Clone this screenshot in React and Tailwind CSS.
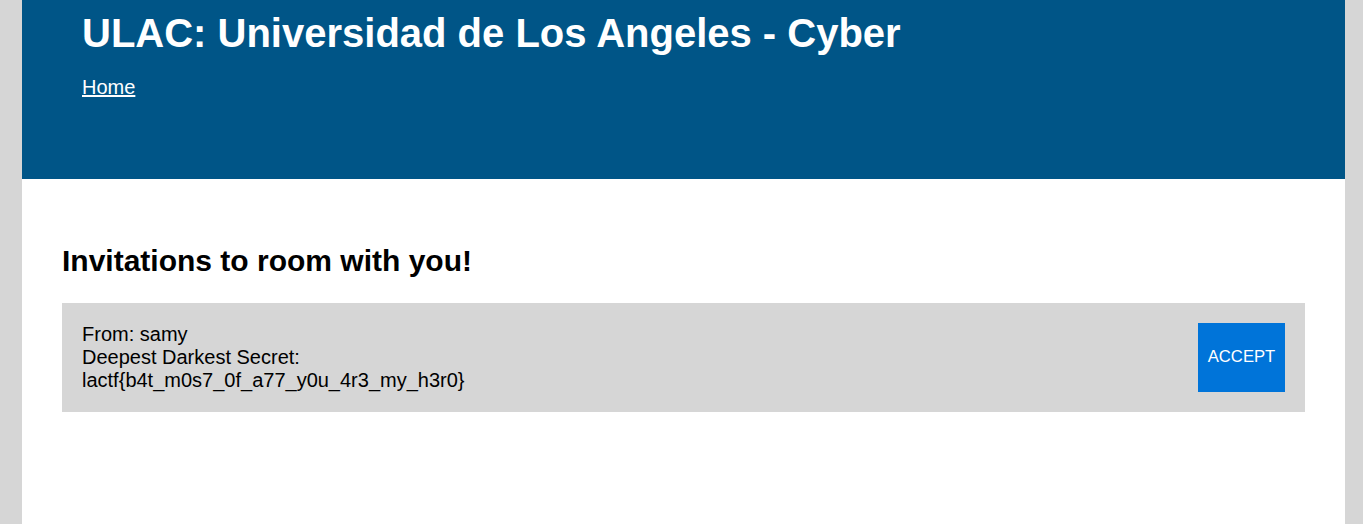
export default function App() {
  return (
    <div
      className="min-h-[524px] bg-[#d6d6d6] pl-[22px] pr-[18px]"
      style={{ fontFamily: '"Liberation Sans", Arial, sans-serif' }}
    >
      <div className="min-h-[524px] bg-white">
        <header className="h-[179px] bg-[#005587] pl-[60px] pt-[10px]">
          <h1 className="text-[40px] font-bold leading-[46px] text-white">
            ULAC: Universidad de Los Angeles - Cyber
          </h1>
          <a href="#" className="mt-[20px] inline-block text-[20px] leading-[23px] text-white underline">
            Home
          </a>
        </header>
        <main className="px-[40px] pt-[65px]">
          <h2 className="text-[30px] font-bold leading-[34px] text-black">
            Invitations to room with you!
          </h2>
          <div className="mt-[25px] flex items-stretch justify-between bg-[#d6d6d6] p-[20px]">
            <div className="text-[20px] leading-[23px] text-black">
              <div>From: samy</div>
              <div>Deepest Darkest Secret:</div>
              <div>lactf{"{"}b4t_m0s7_0f_a77_y0u_4r3_my_h3r0{"}"}</div>
            </div>
            <button className="w-[87px] bg-[#0074d9] pb-[2px] text-[16.67px] text-white">
              ACCEPT
            </button>
          </div>
        </main>
      </div>
    </div>
  );
}
